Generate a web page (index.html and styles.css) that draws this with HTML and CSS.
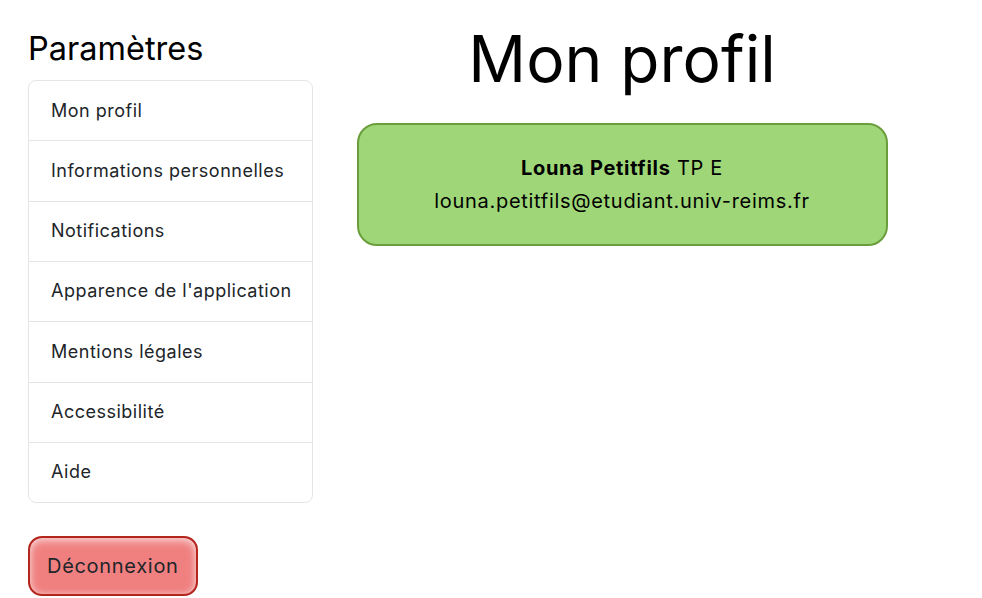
FILE: index.html
```html
<!DOCTYPE html>
<html lang="fr">
<head>
<meta charset="utf-8">
<title>Paramètres</title>
<link rel="stylesheet" href="styles.css">
</head>
<body>
<div class="page">
  <aside class="sidebar">
    <h2 class="side-title">Paramètres</h2>
    <ul class="menu">
      <li class="menu-item">Mon profil</li>
      <li class="menu-item">Informations personnelles</li>
      <li class="menu-item">Notifications</li>
      <li class="menu-item">Apparence de l'application</li>
      <li class="menu-item">Mentions légales</li>
      <li class="menu-item">Accessibilité</li>
      <li class="menu-item">Aide</li>
    </ul>
    <button class="logout">Déconnexion</button>
  </aside>
  <main class="main">
    <h1 class="title">Mon profil</h1>
    <div class="profile-card">
      <div class="line"><strong>Louna Petitfils</strong> TP E</div>
      <div class="line">louna.petitfils@etudiant.univ-reims.fr</div>
    </div>
  </main>
</div>
</body>
</html>
```

FILE: styles.css
```css
* { box-sizing: border-box; }
html, body { margin: 0; padding: 0; background: #fff; }
body {
  font-family: Inter, "Noto Sans", sans-serif;
  color: #212529;
}
.page {
  display: flex;
  padding: 0 51px 0 28px;
}
.sidebar {
  width: 285px;
  flex: none;
}
.side-title {
  margin: 29px 0 0;
  font-weight: 400;
  font-size: 32.5px;
  line-height: 40px;
  color: #000;
}
.menu {
  list-style: none;
  margin: 11px 0 0;
  padding: 0;
  border: 1px solid #e3e5e8;
  border-radius: 8px;
}
.menu-item {
  font-size: 18px;
  letter-spacing: 0.5px;
  line-height: 27.33px;
  padding: 15.5px 8px 16.5px 22px;
  white-space: nowrap;
  border-top: 1px solid #e3e5e8;
}
.menu-item:first-child { border-top: none; }
.logout {
  margin-top: 33px;
  font-family: Inter, "Noto Sans", sans-serif;
  font-size: 20px;
  letter-spacing: 0.7px;
  color: #212529;
  background: #f08080;
  border: 2px solid #b3261e;
  border-radius: 14px;
  padding: 15px 17px;
  line-height: 26px;
  box-shadow: inset 0 3px 8px rgba(255,255,255,0.55), inset 0 0 6px rgba(255,255,255,0.35);
}
.main {
  flex: 1;
  display: flex;
  flex-direction: column;
  align-items: center;
}
.title {
  margin: 19px 0 0;
  font-weight: 400;
  font-size: 64px;
  line-height: 80px;
  color: #000;
}
.profile-card {
  margin-top: 24px;
  width: 531px;
  background: #9fd778;
  border: 2px solid #6a9e3c;
  border-radius: 20px;
  padding: 27px 20px 26px;
  text-align: center;
  font-size: 20px;
  letter-spacing: 0.7px;
  line-height: 33px;
  color: #000;
}
.profile-card strong { font-weight: 700; }
```
